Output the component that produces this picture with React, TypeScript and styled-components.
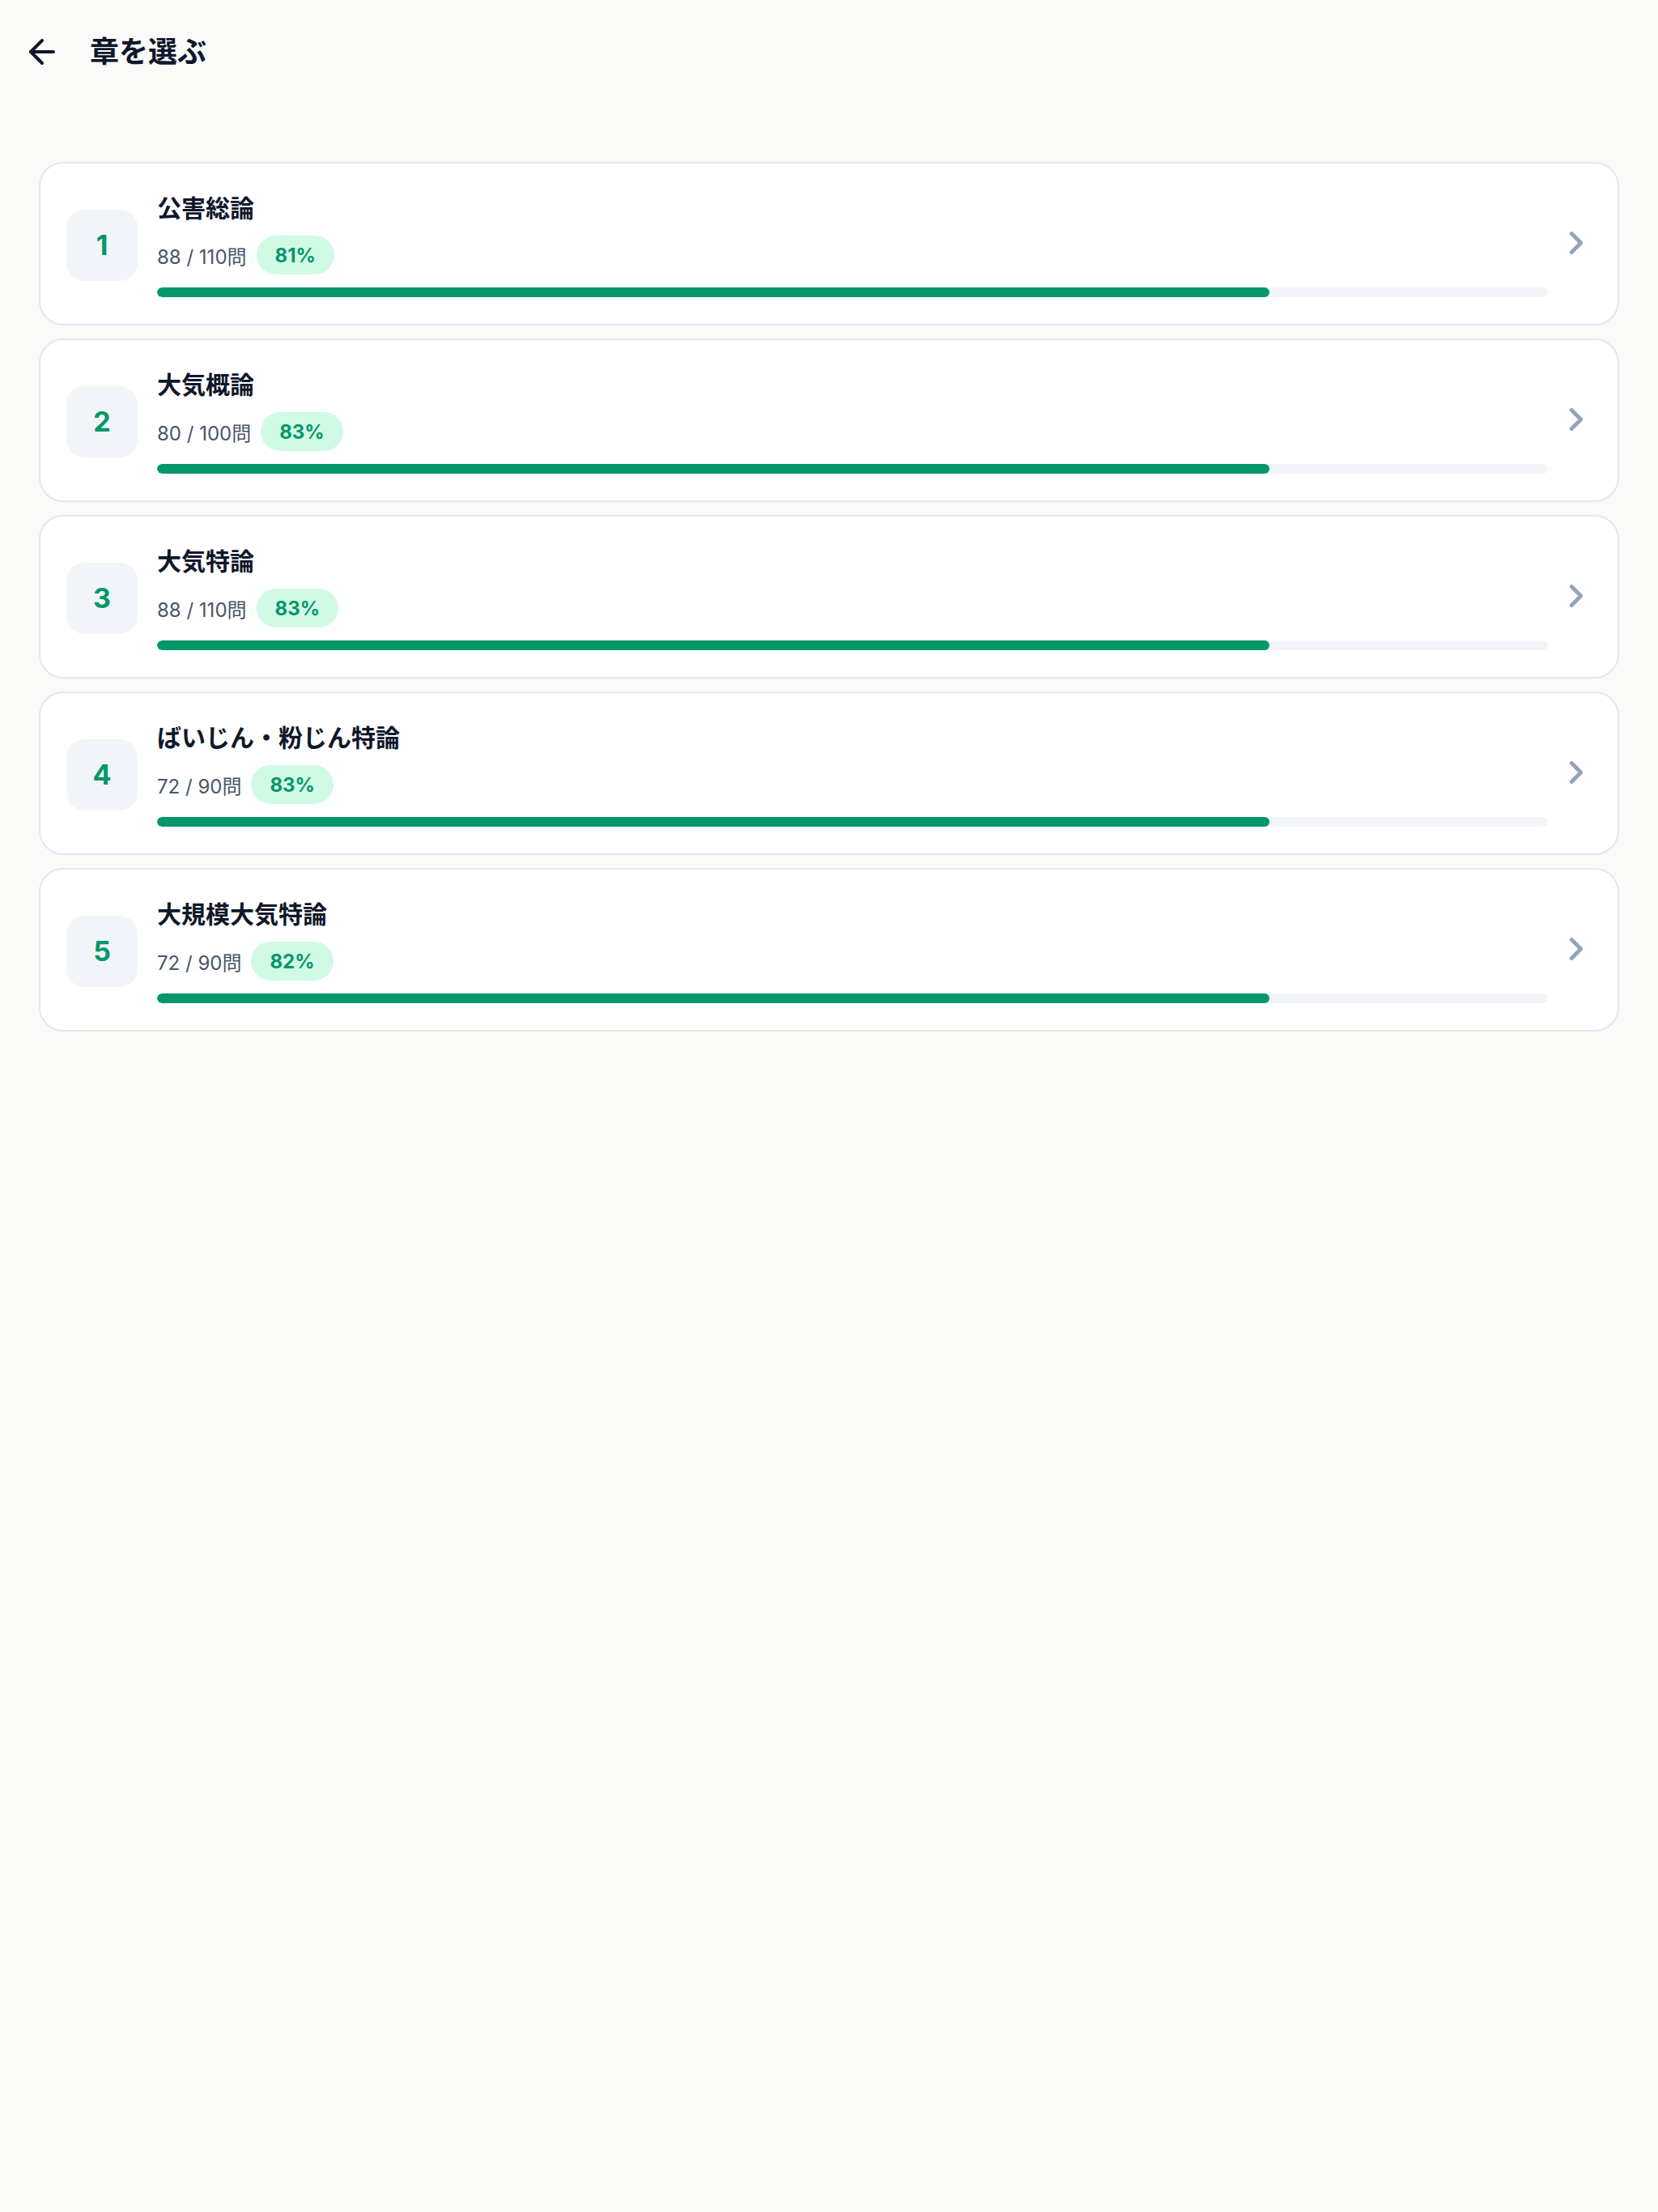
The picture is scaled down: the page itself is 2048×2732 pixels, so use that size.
import React from "react";
import styled, { createGlobalStyle } from "styled-components";

const GlobalStyle = createGlobalStyle`
	html, body {
		margin: 0;
		padding: 0;
		background: #fafaf9;
	}
	body {
		font-family: Inter, "Noto Sans CJK JP", sans-serif;
		color: #0f172a;
	}
	* {
		box-sizing: border-box;
	}
`;

const Page = styled.div`
	min-height: 2732px;
	background: #fafaf9;
`;

const Header = styled.header`
	display: flex;
	align-items: center;
	gap: 35px;
	height: 128px;
	padding: 0 28px;
`;

const BackButton = styled.button`
	display: flex;
	align-items: center;
	justify-content: center;
	width: 48px;
	height: 48px;
	padding: 0;
	border: none;
	background: transparent;
	color: #0f172a;
	cursor: pointer;
`;

const HeaderTitle = styled.h1`
	margin: 0;
	font-size: 36px;
	font-weight: 700;
	line-height: 1;
	color: #0f172a;
`;

const List = styled.main`
	display: flex;
	flex-direction: column;
	gap: 16px;
	padding: 72px 48px 0;
`;

const Card = styled.a`
	display: flex;
	align-items: center;
	gap: 24px;
	padding: 36px 28px 33px 32px;
	background: #ffffff;
	border: 2px solid #e2e8f0;
	border-radius: 30px;
	text-decoration: none;
	color: inherit;
	cursor: pointer;
`;

const NumberBox = styled.div`
	flex: none;
	display: flex;
	align-items: center;
	justify-content: center;
	width: 88px;
	height: 88px;
	border-radius: 22px;
	background: #f1f5f9;
	color: #059669;
	font-size: 34px;
	font-weight: 700;
`;

const Body = styled.div`
	flex: 1;
	min-width: 0;
	display: flex;
	flex-direction: column;
`;

const ChapterTitle = styled.div`
	font-size: 30px;
	font-weight: 700;
	line-height: 39px;
	color: #0f172a;
`;

const MetaRow = styled.div`
	display: flex;
	align-items: center;
	gap: 12px;
	margin-top: 14px;
	height: 48px;
`;

const Count = styled.span`
	font-size: 24px;
	color: #475569;
`;

const Badge = styled.span`
	display: inline-flex;
	align-items: center;
	height: 48px;
	padding: 0 23px;
	border-radius: 999px;
	background: #d1fae5;
	color: #059669;
	font-size: 24px;
	font-weight: 700;
`;

const Track = styled.div`
	margin-top: 16px;
	height: 12px;
	border-radius: 6px;
	background: #f1f5f9;
	overflow: hidden;
`;

const Fill = styled.div`
	height: 100%;
	border-radius: 6px;
	background: #059669;
`;

const Chevron = styled.svg`
	flex: none;
	color: #94a3b8;
	margin-left: -12px;
	margin-top: -6px;
`;

const chapters = [
	{ no: 1, name: "公害総論", done: 88, total: 110, rate: 81 },
	{ no: 2, name: "大気概論", done: 80, total: 100, rate: 83 },
	{ no: 3, name: "大気特論", done: 88, total: 110, rate: 83 },
	{ no: 4, name: "ばいじん・粉じん特論", done: 72, total: 90, rate: 83 },
	{ no: 5, name: "大規模大気特論", done: 72, total: 90, rate: 82 },
];

export default function App() {
	return (
		<Page>
			<GlobalStyle />
			<Header>
				<BackButton aria-label="戻る">
					<svg
						width="48"
						height="48"
						viewBox="0 0 24 24"
						fill="none"
						stroke="currentColor"
						strokeWidth="2"
						strokeLinecap="round"
						strokeLinejoin="round"
					>
						<path d="m12 19-7-7 7-7" />
						<path d="M19 12H5" />
					</svg>
				</BackButton>
				<HeaderTitle>章を選ぶ</HeaderTitle>
			</Header>
			<List>
				{chapters.map((c) => (
					<Card key={c.no}>
						<NumberBox>{c.no}</NumberBox>
						<Body>
							<ChapterTitle>{c.name}</ChapterTitle>
							<MetaRow>
								<Count>
									{c.done} / {c.total}問
								</Count>
								<Badge>{c.rate}%</Badge>
							</MetaRow>
							<Track>
								<Fill style={{ width: `${(c.done / c.total) * 100}%` }} />
							</Track>
						</Body>
						<Chevron
							width="46"
							height="46"
							viewBox="0 0 24 24"
							fill="none"
							stroke="currentColor"
							strokeWidth="2.5"
							strokeLinecap="round"
							strokeLinejoin="round"
						>
							<path d="m9 18 6-6-6-6" />
						</Chevron>
					</Card>
				))}
			</List>
		</Page>
	);
}
